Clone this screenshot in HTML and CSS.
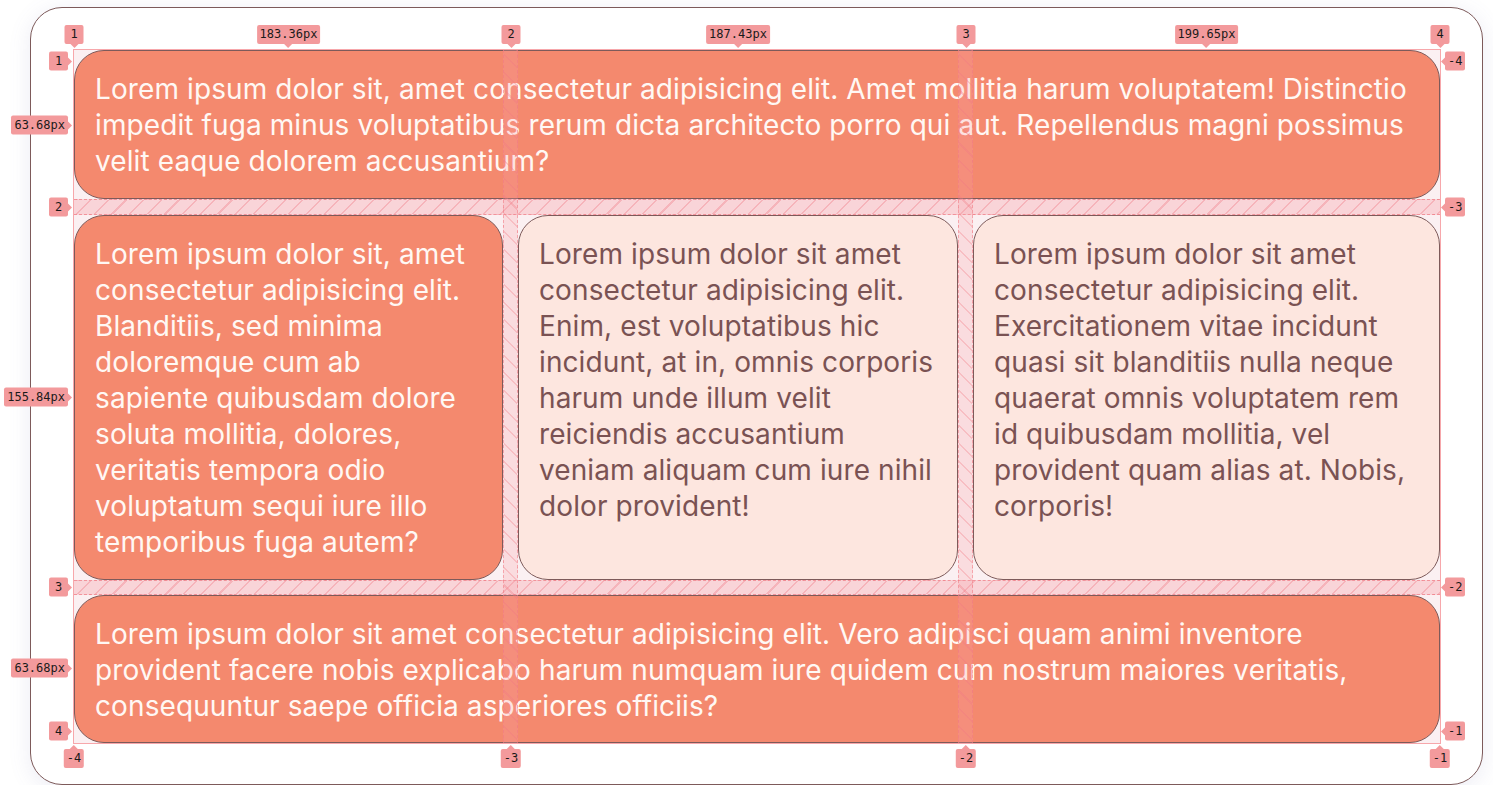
FILE: index.html
```html
<!DOCTYPE html>
<html lang="en">
<head>
<meta charset="utf-8">
<title>Grid layout</title>
<link rel="stylesheet" href="styles.css">
</head>
<body>
<div class="frame">
  <div class="grid">
    <div class="box box-hot span-all">Lorem ipsum dolor sit, amet consectetur adipisicing elit. Amet mollitia harum voluptatem! Distinctio impedit fuga minus voluptatibus rerum dicta architecto porro qui aut. Repellendus magni possimus velit eaque dolorem accusantium?</div>
    <div class="box box-hot">Lorem ipsum dolor sit, amet consectetur adipisicing elit. Blanditiis, sed minima doloremque cum ab sapiente quibusdam dolore soluta mollitia, dolores, veritatis tempora odio voluptatum sequi iure illo temporibus fuga autem?</div>
    <div class="box box-soft">Lorem ipsum dolor sit amet consectetur adipisicing elit. Enim, est voluptatibus hic incidunt, at in, omnis corporis harum unde illum velit reiciendis accusantium veniam aliquam cum iure nihil dolor provident!</div>
    <div class="box box-soft">Lorem ipsum dolor sit amet consectetur adipisicing elit. Exercitationem vitae incidunt quasi sit blanditiis nulla neque quaerat omnis voluptatem rem id quibusdam mollitia, vel provident quam alias at. Nobis, corporis!</div>
    <div class="box box-hot span-all">Lorem ipsum dolor sit amet consectetur adipisicing elit. Vero adipisci quam animi inventore provident facere nobis explicabo harum numquam iure quidem cum nostrum maiores veritatis, consequuntur saepe officia asperiores officiis?</div>

    <div class="overlay" aria-hidden="true">
      <div class="gap gap-row gap-row-1"></div>
      <div class="gap gap-row gap-row-2"></div>
      <div class="gap gap-col gap-col-1"></div>
      <div class="gap gap-col gap-col-2"></div>

      <span class="tag tag-top t-c1">1</span>
      <span class="tag tag-top t-c2">2</span>
      <span class="tag tag-top t-c3">3</span>
      <span class="tag tag-top t-c4">4</span>
      <span class="tag tag-top t-w1">183.36px</span>
      <span class="tag tag-top t-w2">187.43px</span>
      <span class="tag tag-top t-w3">199.65px</span>

      <span class="tag tag-bottom b-c1">-4</span>
      <span class="tag tag-bottom b-c2">-3</span>
      <span class="tag tag-bottom b-c3">-2</span>
      <span class="tag tag-bottom b-c4">-1</span>

      <span class="tag tag-left l-r1">1</span>
      <span class="tag tag-left l-h1">63.68px</span>
      <span class="tag tag-left l-r2">2</span>
      <span class="tag tag-left l-h2">155.84px</span>
      <span class="tag tag-left l-r3">3</span>
      <span class="tag tag-left l-h3">63.68px</span>
      <span class="tag tag-left l-r4">4</span>

      <span class="tag tag-right r-r1">-4</span>
      <span class="tag tag-right r-r2">-3</span>
      <span class="tag tag-right r-r3">-2</span>
      <span class="tag tag-right r-r4">-1</span>
    </div>
  </div>
</div>
</body>
</html>
```

FILE: styles.css
```css
* { box-sizing: border-box; }

html, body {
  margin: 0;
  background: #ffffff;
}

body {
  font-family: Inter, "Noto Sans", sans-serif;
  padding: 7px 10px 0 30px;
}

.frame {
  width: 1453px;
  height: 778px;
  border: 1px solid #7d5a5a;
  border-radius: 32px;
  background: #ffffff;
  box-shadow: 0 4px 22px rgba(110, 110, 170, 0.13);
  display: flex;
  padding: 42px 0 0 43px;
}

.grid {
  position: relative;
  display: grid;
  grid-template-columns: 429px 440px 467px;
  grid-template-rows: 149px 365px 148px;
  gap: 15.5px 15px;
  width: 1366px;
  height: 693px;
  background: #fbf0f2;
  outline: 1px solid #f7a7ab;
}

.box {
  border: 1px solid #7d5a5a;
  border-radius: 30px;
  padding: 20px 20px;
  font-size: 28px;
  line-height: 36px;
  letter-spacing: 0.1px;
}

.box-hot {
  background: #f4896e;
  color: #fff8f4;
}

.box-soft {
  background: #fde6df;
  color: #7a5253;
}

.span-all {
  grid-column: 1 / -1;
}

/* DevTools style grid overlay */
.overlay {
  position: absolute;
  inset: 0;
  pointer-events: none;
}

.gap {
  position: absolute;
}

.gap-row {
  left: 0;
  right: 0;
  height: 15.5px;
  border-top: 1px dashed rgba(240, 120, 130, 0.7);
  border-bottom: 1px dashed rgba(240, 120, 130, 0.7);
  background-color: rgba(246, 160, 168, 0.35);
  background-image: repeating-linear-gradient(135deg,
    rgba(240, 120, 130, 0) 0px,
    rgba(240, 120, 130, 0) 11px,
    rgba(240, 120, 130, 0.35) 11px,
    rgba(240, 120, 130, 0.35) 12.5px);
}
.gap-row-1 { top: 149px; }
.gap-row-2 { top: 529.5px; }

.gap-col {
  top: 0;
  bottom: 0;
  width: 15px;
  border-left: 1px dashed rgba(240, 120, 130, 0.55);
  border-right: 1px dashed rgba(240, 120, 130, 0.55);
  background-color: rgba(246, 160, 168, 0.25);
  background-image: repeating-linear-gradient(45deg,
    rgba(240, 120, 130, 0) 0px,
    rgba(240, 120, 130, 0) 11px,
    rgba(240, 120, 130, 0.3) 11px,
    rgba(240, 120, 130, 0.3) 12.5px);
}
.gap-col-1 { left: 429px; }
.gap-col-2 { left: 884px; }

.tag {
  position: absolute;
  background: #f39a9c;
  color: #1a1a1a;
  font-family: "DejaVu Sans Mono", "Liberation Mono", monospace;
  font-size: 12px;
  line-height: 19px;
  height: 19px;
  min-width: 19px;
  text-align: center;
  padding: 0 3px;
  border-radius: 2px;
  white-space: nowrap;
}

.tag::after {
  content: "";
  position: absolute;
  border: 4px solid transparent;
}

.tag-top { transform: translateX(-50%); top: -25px; }
.tag-top::after {
  top: 100%;
  left: 50%;
  margin-left: -4px;
  border-top-color: #f39a9c;
}

.tag-bottom { transform: translateX(-50%); top: 699px; }
.tag-bottom::after {
  bottom: 100%;
  left: 50%;
  margin-left: -4px;
  border-bottom-color: #f39a9c;
}

.tag-left { right: calc(100% + 6px); transform: translateY(-50%); }
.tag-left::after {
  left: 100%;
  top: 50%;
  margin-top: -4px;
  border-left-color: #f39a9c;
}

.tag-right { left: calc(100% + 5px); transform: translateY(-50%); }
.tag-right::after {
  right: 100%;
  top: 50%;
  margin-top: -4px;
  border-right-color: #f39a9c;
}

.t-c1 { left: 0; }
.t-c2 { left: 437px; }
.t-c3 { left: 892px; }
.t-c4 { left: 1366px; }
.t-w1 { left: 214.5px; }
.t-w2 { left: 664px; }
.t-w3 { left: 1132.5px; }

.b-c1 { left: 0; }
.b-c2 { left: 437px; }
.b-c3 { left: 892px; }
.b-c4 { left: 1366px; }

.l-r1 { top: 11px; }
.l-h1 { top: 75px; }
.l-r2 { top: 157px; }
.l-h2 { top: 347px; }
.l-r3 { top: 537px; }
.l-h3 { top: 618px; }
.l-r4 { top: 681px; }

.r-r1 { top: 11px; }
.r-r2 { top: 157px; }
.r-r3 { top: 537px; }
.r-r4 { top: 681px; }
```
